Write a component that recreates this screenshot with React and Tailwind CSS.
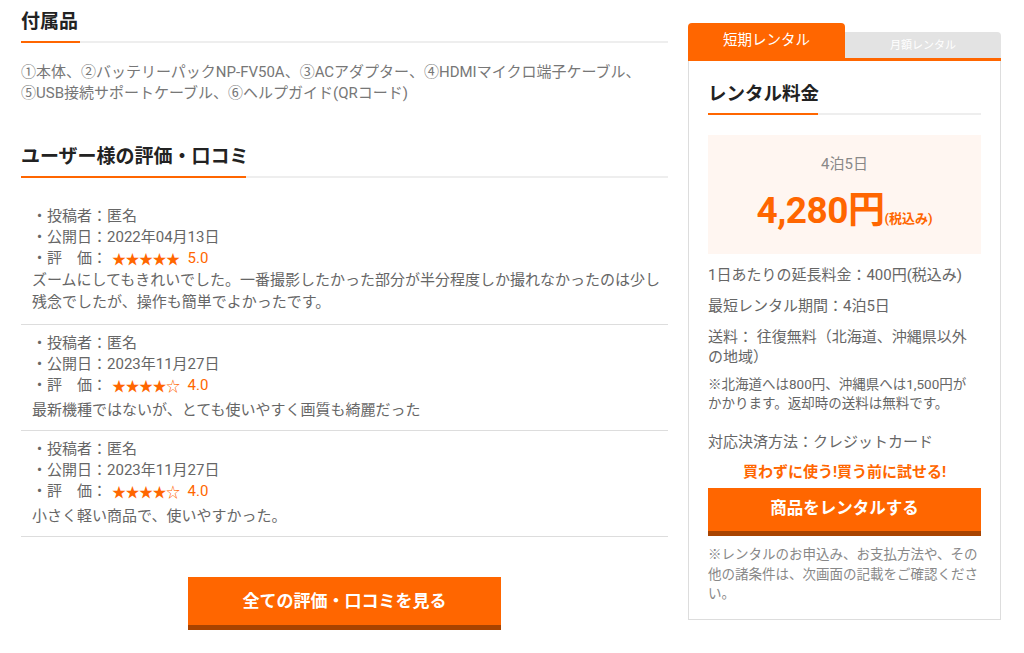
import React from "react";

const font = { fontFamily: "Roboto, 'Noto Sans CJK JP', sans-serif" };

const reviews = [
  {
    date: "2022年04月13日",
    stars: "★★★★★",
    score: "5.0",
    body: "ズームにしてもきれいでした。一番撮影したかった部分が半分程度しか撮れなかったのは少し残念でしたが、操作も簡単でよかったです。",
    box: "pt-[9px] pb-[11px]",
    gap: "",
  },
  {
    date: "2023年11月27日",
    stars: "★★★★☆",
    score: "4.0",
    body: "最新機種ではないが、とても使いやすく画質も綺麗だった",
    box: "pt-[8px] pb-[9px]",
    gap: "mb-[3px]",
  },
  {
    date: "2023年11月27日",
    stars: "★★★★☆",
    score: "4.0",
    body: "小さく軽い商品で、使いやすかった。",
    box: "pt-[8px] pb-[9px]",
    gap: "mb-[3px]",
  },
];

function Heading({ children, bar }) {
  return (
    <div className="border-b-2 border-[#eeeeee] relative">
      <h2 className="text-[19px] font-bold leading-[27px] pb-[6px] text-[#222]">{children}</h2>
      <div className={`absolute left-0 -bottom-[2px] h-[2px] bg-[#ff6600] ${bar}`} />
    </div>
  );
}

function Review({ r }) {
  return (
    <div className={`border-b border-[#dddddd] pl-[11px] pr-[4px] ${r.box} text-[15px] text-[#666]`}>
      <div className="leading-[21px]">・投稿者：匿名</div>
      <div className="leading-[21px]">・公開日：{r.date}</div>
      <div className={`leading-[21px] h-[21px] flex items-center ${r.gap}`}>
        <span>・評　価：</span>
        <span
          className="ml-[5px] text-[#ff6600] text-[14px] tracking-[-0.5px] leading-[21px]"
          style={{ fontFamily: "'Noto Sans CJK JP', sans-serif" }}
        >
          {r.stars}
        </span>
        <span className="text-[#ff6600] ml-[8px]">{r.score}</span>
      </div>
      <p className="leading-[22px]">{r.body}</p>
    </div>
  );
}

export default function App() {
  return (
    <div className="w-[1024px] h-[653px] bg-white flex pl-[21px] overflow-hidden" style={font}>
      {/* Left column */}
      <div className="w-[647px] pt-[8px]">
        <Heading bar="w-[59px]">付属品</Heading>
        <p className="mt-[19px] text-[15px] leading-[21px] text-[#777]">
          ①本体、②バッテリーパックNP-FV50A、③ACアダプター、④HDMIマイクロ端子ケーブル、
          <br />
          ⑤USB接続サポートケーブル、⑥ヘルプガイド(QRコード)
        </p>

        <div className="mt-[39px]">
          <Heading bar="w-[225px]">ユーザー様の評価・口コミ</Heading>
        </div>

        <div className="mt-[19px]">
          {reviews.map((r, i) => (
            <Review key={i} r={r} />
          ))}
        </div>

        <div className="flex justify-center mt-[40px]">
          <button className="w-[313px] h-[53px] bg-[#ff6600] border-b-[5px] border-[#a84300] text-white text-[17px] font-bold pt-[1px]">
            全ての評価・口コミを見る
          </button>
        </div>
      </div>

      {/* Right column */}
      <div className="w-[313px] ml-[20px] pt-[23px]">
        <div className="flex items-end border-b-[3px] border-[#ff6600]">
          <div className="w-[157px] h-[35px] bg-[#ff6600] rounded-t-[4px] text-white text-[14.5px] flex items-center justify-center">
            短期レンタル
          </div>
          <div className="flex-1 h-[26px] bg-[#e3e3e3] rounded-tr-[4px] text-white text-[11px] flex items-center justify-center pt-[2px]">
            月額レンタル
          </div>
        </div>
        <div className="border border-t-0 border-[#dddddd] h-[559px] px-[19px] pt-[19px]">
          <div className="border-b-2 border-[#eeeeee] relative">
            <h3 className="text-[18.5px] font-bold leading-[28px] pb-[5px] text-[#222]">レンタル料金</h3>
            <div className="absolute left-0 -bottom-[2px] h-[2px] w-[110px] bg-[#ff6600]" />
          </div>
          <div className="mt-[20px] h-[119px] bg-[#fff6f1] flex flex-col items-center pt-[19px]">
            <div className="text-[15px] text-[#888] leading-[20px]">4泊5日</div>
            <div className="flex items-baseline text-[#ff6600] font-bold mt-[12px]">
              <span className="text-[37px] leading-[50px] tracking-[-0.5px]">4,280円</span>
              <span className="text-[13px]">(税込み)</span>
            </div>
          </div>
          <div className="text-[15px] text-[#666] mt-[11px]">
            <p className="leading-[20px]">1日あたりの延長料金：400円(税込み)</p>
            <p className="leading-[20px] mt-[11px]">最短レンタル期間：4泊5日</p>
            <p className="leading-[20px] mt-[11px]">送料： 往復無料（北海道、沖縄県以外の地域）</p>
            <p className="w-[271px] text-[13.5px] leading-[19px] mt-[8px]">
              ※北海道へは800円、沖縄県へは1,500円がかかります。返却時の送料は無料です。
            </p>
            <p className="leading-[20px] mt-[19px]">対応決済方法：クレジットカード</p>
          </div>
          <p className="text-center text-[#ff6600] font-bold text-[15px] leading-[20px] mt-[10px]">
            買わずに使う!買う前に試せる!
          </p>
          <button className="mt-[6px] w-full h-[48px] bg-[#ff6600] border-b-[5px] border-[#a84300] text-white text-[16.5px] font-bold">
            商品をレンタルする
          </button>
          <p className="w-[271px] mt-[9px] text-[13.5px] leading-[19.5px] text-[#888]">
            ※レンタルのお申込み、お支払方法や、その他の諸条件は、次画面の記載をご確認ください。
          </p>
        </div>
      </div>
    </div>
  );
}
